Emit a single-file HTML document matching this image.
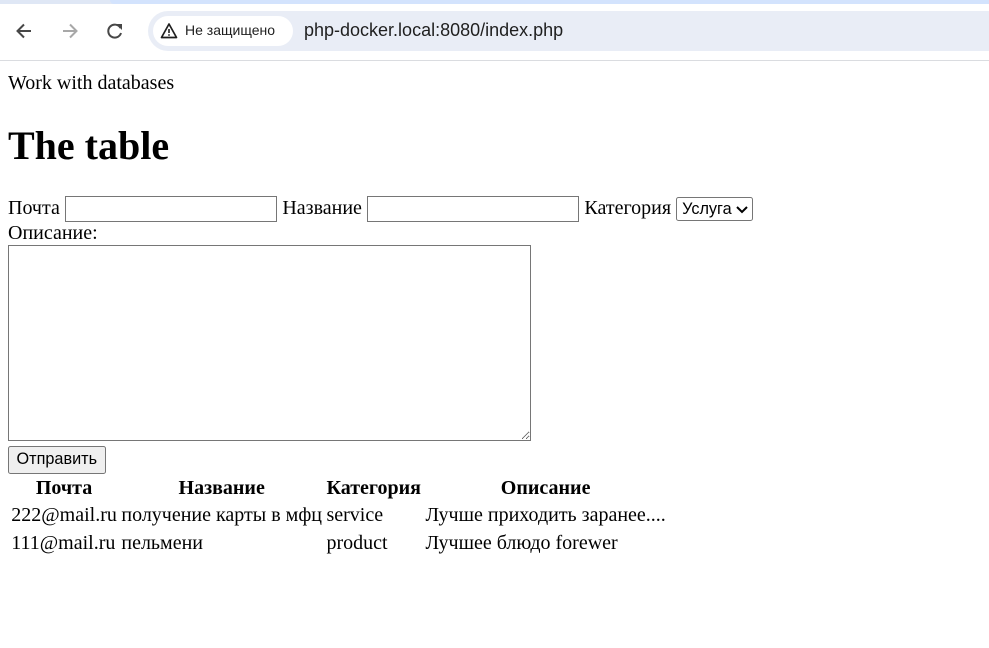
<!DOCTYPE html>
<html><head><meta charset="utf-8"><style>
html,body{margin:0;padding:0;background:#fff;width:989px;height:648px;overflow:hidden}
#bar{position:absolute;left:0;top:0;width:989px;height:60px;background:#fff;border-bottom:1px solid #dadce0;z-index:2}
#strip{position:absolute;left:0;top:0;width:989px;height:4px;background:#dfe7f5}
#strip2{position:absolute;left:110px;top:0;width:879px;height:4px;background:#d3e3fd;border-radius:0 0 0 8px}
#omni{position:absolute;left:148px;top:11px;width:860px;height:40px;background:#e9edf6;border-radius:20px}
#chip{position:absolute;left:153px;top:16px;width:140px;height:30px;background:#fff;border-radius:15px;font:14px "Liberation Sans",sans-serif;color:#1f1f1f}
#chip span{position:absolute;left:32px;top:6px}
#url{position:absolute;left:304px;top:20px;font:18px "Liberation Sans",sans-serif;color:#1f1f1f}
#page{position:absolute;left:-1.6px;top:49.6px;width:792px;zoom:1.25}
#in{margin:8px;font-family:"Liberation Serif","Noto Serif CJK SC",serif;font-size:16px}
input[type=text]{width:170px;box-sizing:border-box;height:21px;border:1px solid #767676;padding:1px 2px;vertical-align:baseline}
select{font:13px "Liberation Sans",sans-serif;height:19px;border:1px solid #767676;border-radius:2px;background:#fff}
textarea{width:418px;height:157px;box-sizing:border-box;border:1px solid #767676;display:block;margin:0}
button{font:13px "Liberation Sans",sans-serif;background:#efefef;border:1px solid #767676;border-radius:2px;padding:1px 6px;margin-top:4px;height:22px}
h1{font-size:2em;margin:.67em 0}
table{border-spacing:2px}
th,td{padding:1px;text-align:left}
th{text-align:center}
</style></head><body>
<div id="bar"><div id="strip"></div><div id="strip2"></div>
<svg style="position:absolute;left:14px;top:21px" width="20" height="20" viewBox="0 0 20 20"><path d="M17 10H4M10 3.5L3.5 10 10 16.5" stroke="#474747" stroke-width="2" fill="none"/></svg>
<svg style="position:absolute;left:60px;top:21px" width="20" height="20" viewBox="0 0 20 20"><path d="M3 10H16M10 3.5L16.5 10 10 16.5" stroke="#a8a8a8" stroke-width="2" fill="none"/></svg>
<svg style="position:absolute;left:105px;top:21px" width="20" height="20" viewBox="0 0 20 20"><path d="M15.5 7A6.5 6.5 0 1 0 16 12" stroke="#474747" stroke-width="2" fill="none"/><path d="M11 3H17V9Z" fill="#474747"/></svg>
<div id="omni"></div>
<div id="chip"><svg style="position:absolute;left:7px;top:6px" width="18" height="18" viewBox="0 0 18 18"><path d="M9 2L1.5 15.5H16.5Z" stroke="#1f1f1f" stroke-width="1.7" fill="none" stroke-linejoin="round"/><path d="M9 7V11M9 12.3V13.8" stroke="#1f1f1f" stroke-width="1.6"/></svg><span>Не защищено</span></div>
<div id="url">php-docker.local:8080/index.php</div>
</div>
<div id="page"><div id="in">
<div>Work with databases</div>
<h1>The table</h1>
<form>Почта <input type="text"> Название <input type="text"> Категория <select><option>Услуга</option></select><br>Описание:<br><textarea></textarea><button type="button">Отправить</button></form>
<table>
<tr><th>Почта</th><th>Название</th><th>Категория</th><th>Описание</th></tr>
<tr><td>222@mail.ru</td><td>получение карты в мфц</td><td>service</td><td>Лучше приходить заранее....</td></tr>
<tr><td>111@mail.ru</td><td>пельмени</td><td>product</td><td>Лучшее блюдо forewer</td></tr>
</table>
</div></div>
</body></html>
